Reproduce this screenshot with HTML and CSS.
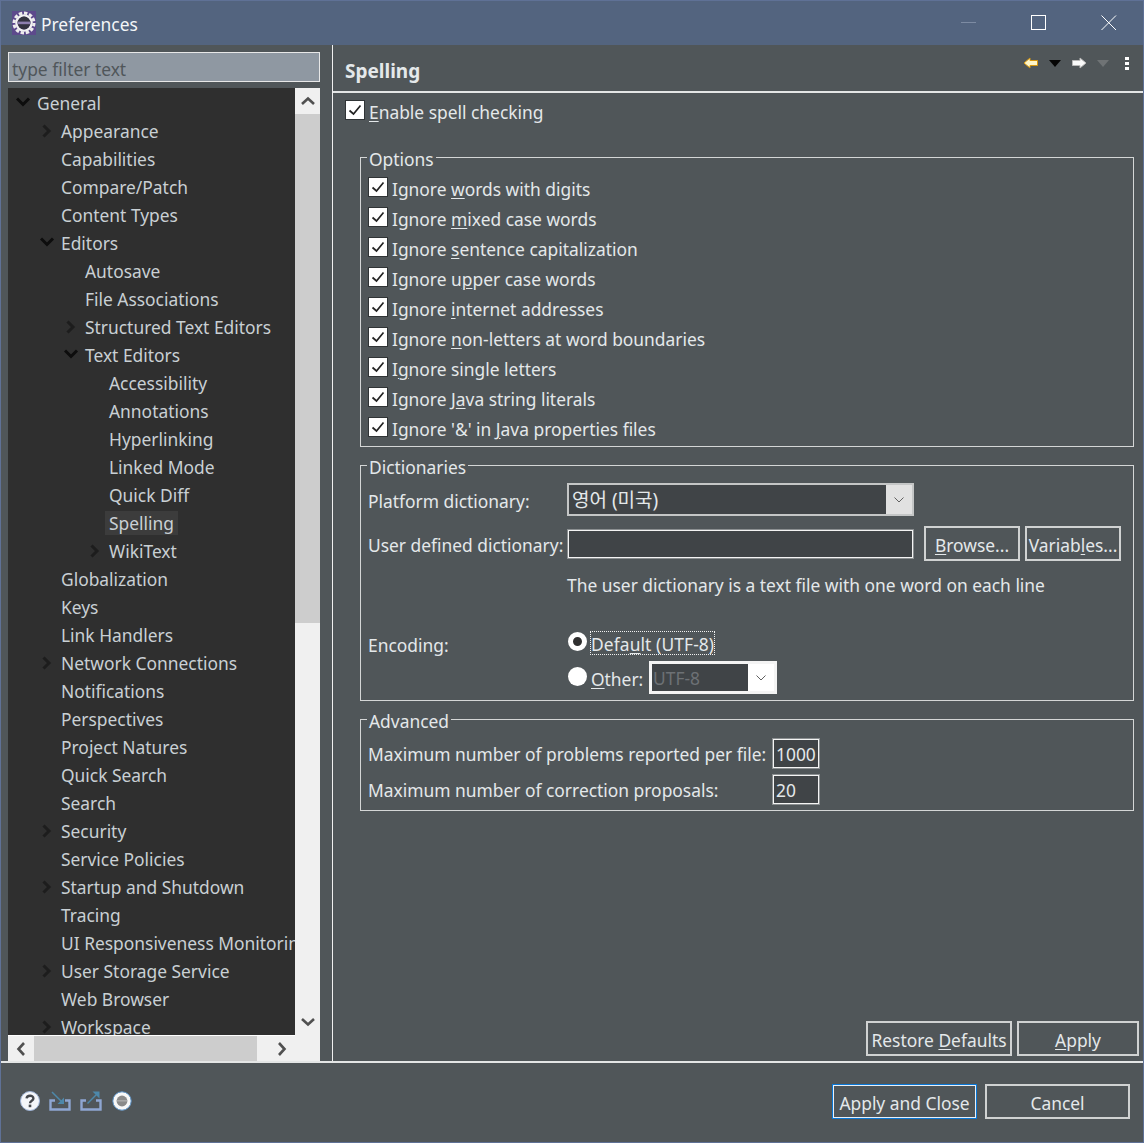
FILE: index.html
```html
<!DOCTYPE html>
<html lang="en">
<head>
    <meta charset="UTF-8">
    <meta name="viewport" content="width=device-width, initial-scale=1.0">
    <title>Preferences</title>
    <link rel="stylesheet" href="styles.css">
</head>
<body>
    <svg class="defs" width="0" height="0">
        <symbol id="tick" viewBox="0 0 18 18"><path d="M3.5 9.5 L7.5 13 L14.5 4.5" fill="none" stroke="#222" stroke-width="1.7"/></symbol>
        <symbol id="tw-right" viewBox="0 0 20 14"><path d="M3 1.5 L8.5 7 L3 12.5" fill="none" stroke="#1d1d1d" stroke-width="3"/></symbol>
        <symbol id="tw-down" viewBox="0 0 20 14"><path d="M0.5 2.5 L6.5 8.5 L12.5 2.5" fill="none" stroke="#0d0d0d" stroke-width="3"/></symbol>
        <symbol id="combo-arrow" viewBox="0 0 12 8"><path d="M1.5 1.5 L6 6 L10.5 1.5" fill="none" stroke="#606060" stroke-width="1"/></symbol>
    </svg>

    <div class="window">
        <div class="titlebar">
            <svg class="app-icon" width="24" height="24" viewBox="0 0 24 24">
                <rect width="24" height="24" fill="#5d4a8c"/>
                <circle cx="12" cy="12" r="10" fill="none" stroke="#ececec" stroke-width="3" stroke-dasharray="3.4 1.8"/>
                <circle cx="12" cy="12" r="7.6" fill="none" stroke="#f2f2f2" stroke-width="2.4"/>
                <circle cx="12" cy="12" r="6.4" fill="#33333f"/>
                <rect x="5.8" y="10.6" width="12.4" height="2.6" fill="#8d7fae"/>
            </svg>
            <span class="title-text">Preferences</span>
            <div class="win-controls">
                <svg width="16" height="16" viewBox="0 0 16 16"><path d="M0 7.5 H15" stroke="#7d8ba3"/></svg>
                <svg width="16" height="16" viewBox="0 0 16 16"><rect x="0.5" y="0.5" width="14" height="14" fill="none" stroke="#fff"/></svg>
                <svg width="16" height="16" viewBox="0 0 16 16"><path d="M0.5 0.5 L15 15 M15 0.5 L0.5 15" stroke="#fff"/></svg>
            </div>
        </div>

        <div class="main">
            <div class="left">
                <input class="filter" type="text" placeholder="type filter text">
                <div class="tree-wrap">
                    <div class="tree">
                        <div class="row lv0"><svg class="tw"><use href="#tw-down"/></svg><span>General</span></div>
                        <div class="row lv1"><svg class="tw"><use href="#tw-right"/></svg><span>Appearance</span></div>
                        <div class="row lv1"><i class="tw"></i><span>Capabilities</span></div>
                        <div class="row lv1"><i class="tw"></i><span>Compare/Patch</span></div>
                        <div class="row lv1"><i class="tw"></i><span>Content Types</span></div>
                        <div class="row lv1"><svg class="tw"><use href="#tw-down"/></svg><span>Editors</span></div>
                        <div class="row lv2"><i class="tw"></i><span>Autosave</span></div>
                        <div class="row lv2"><i class="tw"></i><span>File Associations</span></div>
                        <div class="row lv2"><svg class="tw"><use href="#tw-right"/></svg><span>Structured Text Editors</span></div>
                        <div class="row lv2"><svg class="tw"><use href="#tw-down"/></svg><span>Text Editors</span></div>
                        <div class="row lv3"><i class="tw"></i><span>Accessibility</span></div>
                        <div class="row lv3"><i class="tw"></i><span>Annotations</span></div>
                        <div class="row lv3"><i class="tw"></i><span>Hyperlinking</span></div>
                        <div class="row lv3"><i class="tw"></i><span>Linked Mode</span></div>
                        <div class="row lv3"><i class="tw"></i><span>Quick Diff</span></div>
                        <div class="row lv3"><i class="tw"></i><span class="selected">Spelling</span></div>
                        <div class="row lv3"><svg class="tw"><use href="#tw-right"/></svg><span>WikiText</span></div>
                        <div class="row lv1"><i class="tw"></i><span>Globalization</span></div>
                        <div class="row lv1"><i class="tw"></i><span>Keys</span></div>
                        <div class="row lv1"><i class="tw"></i><span>Link Handlers</span></div>
                        <div class="row lv1"><svg class="tw"><use href="#tw-right"/></svg><span>Network Connections</span></div>
                        <div class="row lv1"><i class="tw"></i><span>Notifications</span></div>
                        <div class="row lv1"><i class="tw"></i><span>Perspectives</span></div>
                        <div class="row lv1"><i class="tw"></i><span>Project Natures</span></div>
                        <div class="row lv1"><i class="tw"></i><span>Quick Search</span></div>
                        <div class="row lv1"><i class="tw"></i><span>Search</span></div>
                        <div class="row lv1"><svg class="tw"><use href="#tw-right"/></svg><span>Security</span></div>
                        <div class="row lv1"><i class="tw"></i><span>Service Policies</span></div>
                        <div class="row lv1"><svg class="tw"><use href="#tw-right"/></svg><span>Startup and Shutdown</span></div>
                        <div class="row lv1"><i class="tw"></i><span>Tracing</span></div>
                        <div class="row lv1"><i class="tw"></i><span>UI Responsiveness Monitoring</span></div>
                        <div class="row lv1"><svg class="tw"><use href="#tw-right"/></svg><span>User Storage Service</span></div>
                        <div class="row lv1"><i class="tw"></i><span>Web Browser</span></div>
                        <div class="row lv1"><svg class="tw"><use href="#tw-right"/></svg><span>Workspace</span></div>
                    </div>
                    <div class="vscroll">
                        <div class="sb-btn"><svg width="16" height="10" viewBox="0 0 16 10"><path d="M2 8 L8 2.5 L14 8" fill="none" stroke="#505050" stroke-width="2.6"/></svg></div>
                        <div class="v-thumb"></div>
                        <div class="sb-fill"></div>
                        <div class="sb-btn"><svg width="16" height="10" viewBox="0 0 16 10"><path d="M2 2 L8 7.5 L14 2" fill="none" stroke="#505050" stroke-width="2.6"/></svg></div>
                    </div>
                    <div class="hscroll">
                        <div class="sb-btn-h"><svg width="10" height="16" viewBox="0 0 10 16"><path d="M8 2 L2.5 8 L8 14" fill="none" stroke="#505050" stroke-width="2.6"/></svg></div>
                        <div class="h-thumb"></div>
                        <div class="sb-btn-h"><svg width="10" height="16" viewBox="0 0 10 16"><path d="M2 2 L7.5 8 L2 14" fill="none" stroke="#505050" stroke-width="2.6"/></svg></div>
                    </div>
                    <div class="corner"></div>
                </div>
            </div>

            <div class="right">
                <div class="page-head">
                    <h1>Spelling</h1>
                    <div class="page-tools">
                        <svg width="16" height="12" viewBox="0 0 16 12"><path d="M1 6 L7 1 V3.5 H14.5 V8.5 H7 V11 Z" fill="#fff6c8" stroke="#d8980f"/></svg>
                        <svg width="12" height="7" viewBox="0 0 12 7"><path d="M0 0 H12 L6 7 Z" fill="#050505"/></svg>
                        <svg width="16" height="12" viewBox="0 0 16 12"><path d="M15 6 L9 1 V3.5 H1.5 V8.5 H9 V11 Z" fill="#fafafa" stroke="#b9b9b9"/></svg>
                        <svg width="12" height="7" viewBox="0 0 12 7"><path d="M0 0 H12 L6 7 Z" fill="#6f7375"/></svg>
                        <svg class="dots" width="4" height="14" viewBox="0 0 4 14"><path d="M0 0 H4 V3 H0 Z M0 5 H4 V8 H0 Z M0 10 H4 V13 H0 Z" fill="#fff"/></svg>
                    </div>
                </div>

                <div class="page-body">
                    <label class="enable"><span class="check"><svg><use href="#tick"/></svg></span><span><u>E</u>nable spell checking</span></label>

                    <fieldset class="group options">
                        <legend>Options</legend>
                        <label class="opt"><span class="check"><svg><use href="#tick"/></svg></span><span>Ignore <u>w</u>ords with digits</span></label>
                        <label class="opt"><span class="check"><svg><use href="#tick"/></svg></span><span>Ignore <u>m</u>ixed case words</span></label>
                        <label class="opt"><span class="check"><svg><use href="#tick"/></svg></span><span>Ignore <u>s</u>entence capitalization</span></label>
                        <label class="opt"><span class="check"><svg><use href="#tick"/></svg></span><span>Ignore u<u>p</u>per case words</span></label>
                        <label class="opt"><span class="check"><svg><use href="#tick"/></svg></span><span>Ignore <u>i</u>nternet addresses</span></label>
                        <label class="opt"><span class="check"><svg><use href="#tick"/></svg></span><span>Ignore <u>n</u>on-letters at word boundaries</span></label>
                        <label class="opt"><span class="check"><svg><use href="#tick"/></svg></span><span>I<u>g</u>nore single letters</span></label>
                        <label class="opt"><span class="check"><svg><use href="#tick"/></svg></span><span>Ignore J<u>a</u>va string literals</span></label>
                        <label class="opt"><span class="check"><svg><use href="#tick"/></svg></span><span>Ignore '&amp;' in <u>J</u>ava properties files</span></label>
                    </fieldset>

                    <fieldset class="group dict">
                        <legend>Dictionaries</legend>
                        <div class="dict-row platform">
                            <span class="dict-label">Platform dictionary:</span>
                            <div class="combo wide">
                                <span class="combo-text">영어 (미국)</span>
                                <span class="combo-btn"><svg width="12" height="8"><use href="#combo-arrow"/></svg></span>
                            </div>
                        </div>
                        <div class="dict-row user">
                            <span class="dict-label">User defined dictionary:</span>
                            <div class="field user-field"></div>
                            <button class="btn browse"><u>B</u>rowse...</button>
                            <button class="btn variables">Variab<u>l</u>es...</button>
                        </div>
                        <div class="dict-note">The user dictionary is a text file with one word on each line</div>
                        <div class="dict-row encoding">
                            <span class="dict-label">Encoding:</span>
                            <span class="radio on"></span>
                            <span class="focus-text">Defa<u>u</u>lt (UTF-8)</span>
                        </div>
                        <div class="dict-row other">
                            <span class="dict-label"></span>
                            <span class="radio"></span>
                            <span class="other-text"><u>O</u>ther:</span>
                            <div class="combo small">
                                <span class="combo-text muted">UTF-8</span>
                                <span class="combo-btn white"><svg width="12" height="8"><use href="#combo-arrow"/></svg></span>
                            </div>
                        </div>
                    </fieldset>

                    <fieldset class="group advanced">
                        <legend>Advanced</legend>
                        <div class="adv-row">
                            <span class="adv-label">Maximum number of problems reported per file:</span>
                            <div class="field num">1000</div>
                        </div>
                        <div class="adv-row">
                            <span class="adv-label">Maximum number of correction proposals:</span>
                            <div class="field num">20</div>
                        </div>
                    </fieldset>
                </div>

                <div class="page-buttons">
                    <button class="btn restore">Restore <u>D</u>efaults</button>
                    <button class="btn apply"><u>A</u>pply</button>
                </div>
            </div>
        </div>

        <div class="footer">
            <div class="footer-icons">
                <svg width="20" height="20" viewBox="0 0 20 20">
                    <circle cx="10" cy="10" r="9.5" fill="#f4f6fa" stroke="#9fb4d8"/>
                    <path d="M6.6 7.4 C6.8 3.8 13.4 3.8 13.4 7.4 C13.4 9.8 10 9.6 10 12.2" fill="none" stroke="#44474d" stroke-width="2.4"/>
                    <rect x="8.7" y="13.6" width="2.6" height="2.6" fill="#44474d"/>
                </svg>
                <svg width="22" height="20" viewBox="0 0 22 20">
                    <path d="M6 9.5 H1.5 V18.5 H20.5 V9.5 H16" fill="none" stroke="#8ea6d2" stroke-width="2.4"/>
                    <path d="M3 1 L12.5 10.5" stroke="#4d88aa" stroke-width="1.5"/>
                    <path d="M8.5 13 H15 V6.5 Z" fill="#4d88aa"/>
                </svg>
                <svg width="22" height="20" viewBox="0 0 22 20">
                    <path d="M6 9.5 H1.5 V18.5 H20.5 V9.5 H16" fill="none" stroke="#8ea6d2" stroke-width="2.4"/>
                    <path d="M7.5 12.5 L17 3" stroke="#4d88aa" stroke-width="1.5"/>
                    <path d="M12.5 0.5 H19.5 V7.5 Z" fill="#4d88aa"/>
                </svg>
                <svg class="record" width="20" height="20" viewBox="0 0 20 20">
                    <circle cx="10" cy="10" r="9.2" fill="#f8f8f8" stroke="#5c93c8"/>
                    <circle cx="10" cy="10" r="5.4" fill="#8a8a8a"/>
                    <rect x="4.8" y="9" width="10.4" height="1.6" fill="#a8a8a8"/>
                </svg>
            </div>
            <div class="footer-buttons">
                <button class="btn default">Apply and Close</button>
                <button class="btn cancel">Cancel</button>
            </div>
        </div>
    </div>
</body>
</html>
```

FILE: styles.css
```css
html, body {
    margin: 0;
    padding: 0;
}
body {
    width: 1144px;
    height: 1143px;
    overflow: hidden;
    font-family: "Noto Sans", "Noto Sans CJK KR", sans-serif;
    font-size: 17.4px;
    line-height: 24px;
    color: #e4e8ea;
    background-color: #505659;
}
.defs {
    position: absolute;
}
u {
    text-underline-offset: 2px;
    text-decoration-thickness: 1px;
}
.window {
    width: 1144px;
    height: 1143px;
    box-sizing: border-box;
    border: 1px solid #5f7196;
    display: flex;
    flex-direction: column;
}

/* title bar */
.titlebar {
    height: 44px;
    flex: none;
    display: flex;
    align-items: center;
    background-color: #53647f;
    padding-left: 11px;
    box-sizing: border-box;
    color: #f4f6f8;
}
.app-icon {
    margin-right: 5px;
    margin-top: -1px;
}
.title-text {
    flex: 1;
    padding-top: 2px;
}
.win-controls {
    display: flex;
    gap: 54px;
    padding-right: 26px;
    margin-top: -1px;
}

.main {
    height: 1018px;
    flex: none;
    display: flex;
    border-bottom: 2px solid #e4e6e6;
    box-sizing: border-box;
}

/* left side */
.left {
    width: 331px;
    flex: none;
    padding: 7px 0 0 7px;
    box-sizing: border-box;
}
.filter {
    display: block;
    width: 312px;
    height: 30px;
    box-sizing: border-box;
    border: 1px solid #e8e8e8;
    background-color: #8f98a2;
    padding: 4px 3px 0;
    margin: 0 0 6px 0;
    outline: none;
    font: inherit;
}
.filter::placeholder {
    color: #50565a;
    opacity: 1;
}
.tree-wrap {
    display: grid;
    grid-template-columns: 287px 25px;
    grid-template-rows: 947px 26px;
}
.tree {
    background-color: #2f2f2f;
    overflow: hidden;
    padding-top: 1px;
    box-sizing: border-box;
    color: #c9d0d4;
}
.row {
    height: 28px;
    display: flex;
    align-items: center;
    white-space: nowrap;
}
.row.lv0 { padding-left: 8px; }
.row.lv1 { padding-left: 32px; }
.row.lv2 { padding-left: 56px; }
.row.lv3 { padding-left: 80px; }
.tw {
    width: 21px;
    height: 14px;
    flex: none;
    display: block;
}
.selected {
    background-color: #3c3c3c;
    margin-left: -4px;
    padding: 0 4px;
}
.vscroll {
    display: flex;
    flex-direction: column;
    background-color: #f0f0f0;
}
.sb-btn {
    height: 26px;
    flex: none;
    display: flex;
    align-items: center;
    justify-content: center;
}
.v-thumb {
    height: 509px;
    flex: none;
    background-color: #cdcdcd;
}
.sb-fill {
    flex: 1;
}
.hscroll {
    display: flex;
    background-color: #f0f0f0;
    border-top: 1px solid #fff;
    box-sizing: border-box;
    justify-content: space-between;
}
.sb-btn-h {
    width: 26px;
    flex: none;
    display: flex;
    align-items: center;
    justify-content: center;
}
.h-thumb {
    width: 223px;
    background-color: #cdcdcd;
    margin-right: auto;
}
.corner {
    background-color: #f0f0f0;
    border-top: 1px solid #f0f0f0;
}

/* right side */
.right {
    flex: 1;
    display: flex;
    flex-direction: column;
    border-left: 1px solid #f0f0f0;
    min-width: 0;
}
.page-head {
    height: 48px;
    flex: none;
    display: flex;
    justify-content: space-between;
    box-sizing: border-box;
    border-bottom: 2px solid #e4e6e6;
}
.page-head h1 {
    margin: 0;
    padding: 14px 0 0 12px;
    font-size: 19px;
    line-height: 24px;
    font-weight: 700;
}
.page-tools {
    display: flex;
    align-items: flex-start;
    padding: 12px 14px 0 0;
    gap: 10px;
}
.page-tools svg {
    margin-top: 0;
}
.page-tools svg:nth-child(2), .page-tools svg:nth-child(4) {
    margin-top: 3px;
}
.page-tools .dots {
    margin-left: 6px;
}
.page-body {
    flex: 1;
    padding: 7px 9px 0 12px;
}
.enable {
    display: flex;
    height: 24px;
    margin-bottom: 19px;
}
.check {
    width: 20px;
    height: 20px;
    flex: none;
    box-sizing: border-box;
    background-color: #fff;
    border: 1px solid #303436;
    margin-right: 4px;
    display: block;
}
.check svg {
    width: 18px;
    height: 18px;
    display: block;
}
.group {
    margin: 0 0 4px 15px;
    padding: 0 6px 0 6px;
    border: 1px solid #d4d6d6;
    min-width: 0;
}
.group legend {
    padding: 4px 2px 0;
    line-height: 24px;
}

.options {
    padding-top: 3px;
    padding-bottom: 2px;
}
.opt {
    display: flex;
    align-items: center;
    height: 30px;
    margin-left: 1px;
}
.opt .check {
    margin-bottom: 4px;
}

.dict {
    padding-top: 4px;
    padding-bottom: 6px;
}
.dict-row {
    display: flex;
    align-items: center;
}
.dict-label {
    width: 199px;
    flex: none;
    margin-left: 1px;
    padding-top: 2px;
    white-space: nowrap;
}
.encoding .dict-label {
    padding-top: 4px;
}
.platform {
    height: 33px;
}
.combo {
    display: flex;
    box-sizing: border-box;
    border: 2px solid #c4c6c6;
    height: 33px;
}
.combo.wide {
    width: 347px;
    font-size: 19px;
}
.combo-text {
    flex: 1;
    background-color: #404447;
    padding-left: 3px;
    line-height: 30px;
    white-space: nowrap;
    overflow: hidden;
}
.combo-btn {
    width: 26px;
    flex: none;
    background-color: #e1e1e1;
    display: flex;
    align-items: center;
    justify-content: center;
}
.user {
    height: 35px;
    margin-top: 10px;
}
.field {
    box-sizing: border-box;
    background-color: #404447;
    border: 1px solid #f4f4f4;
    outline: 1px solid #8b8f91;
}
.user-field {
    width: 345px;
    height: 28px;
    margin: 0 1px;
}
.btn {
    font: inherit;
    color: inherit;
    background-color: #505659;
    border: 2px solid #d0d2d2;
    box-sizing: border-box;
    height: 35px;
    padding: 3px 0 0;
}
.browse {
    width: 96px;
    margin-left: 10px;
}
.variables {
    width: 96px;
    margin-left: 5px;
}
.dict-note {
    margin: 12px 0 0 200px;
    line-height: 24px;
}
.encoding {
    height: 24px;
    margin-top: 34px;
}
.radio {
    width: 19px;
    height: 19px;
    flex: none;
    box-sizing: border-box;
    border-radius: 50%;
    background-color: #fff;
    margin-left: 1px;
    margin-bottom: 3px;
}
.radio.on {
    border: 5px solid #fff;
    background-color: #303030;
}
.focus-text {
    margin-left: 3px;
    padding: 0 1px;
    outline: 1px dotted #f0f0f0;
    outline-offset: -1px;
    white-space: nowrap;
    height: 24px;
    line-height: 27px;
    width: 125px;
    flex: none;
    box-sizing: border-box;
    letter-spacing: 0.1px;
}
.other {
    height: 33px;
    margin-top: 6px;
}
.other-text {
    margin-left: 4px;
    width: 58px;
    flex: none;
    padding-top: 2px;
}
.combo.small {
    width: 128px;
    border: 3px solid #f4f4f4;
}
.muted {
    color: #6d7175;
    padding-left: 1px;
    line-height: 29px;
}
.combo-btn.white {
    background-color: #fff;
}

.advanced {
    padding-top: 5px;
    padding-bottom: 6px;
    margin-bottom: 0;
}
.adv-row {
    display: flex;
    align-items: center;
    margin-left: 1px;
    height: 30px;
    margin-bottom: 6px;
}
.adv-row:last-child {
    margin-bottom: 0;
}
.adv-label {
    width: 405px;
    flex: none;
    white-space: nowrap;
    padding-top: 2px;
}
.num {
    width: 46px;
    height: 29px;
    line-height: 29px;
    padding-left: 2px;
}

.page-buttons {
    flex: none;
    display: flex;
    justify-content: flex-end;
    gap: 5px;
    padding: 0 4px 5px 0;
}
.restore {
    width: 146px;
}
.apply {
    width: 122px;
}

/* bottom bar */
.footer {
    flex: 1;
    display: flex;
    justify-content: space-between;
    align-items: flex-start;
}
.footer-icons {
    display: flex;
    align-items: center;
    gap: 9px;
    padding: 28px 0 0 19px;
}
.footer-icons .record {
    margin-left: 1px;
}
.footer-buttons {
    display: flex;
    gap: 8px;
    padding: 21px 13px 0 0;
}
.footer-buttons .btn {
    width: 145px;
}
.default {
    border: 2px solid #0a78d7;
    outline: 1px solid #e8f0f8;
    outline-offset: -2px;
}
```
